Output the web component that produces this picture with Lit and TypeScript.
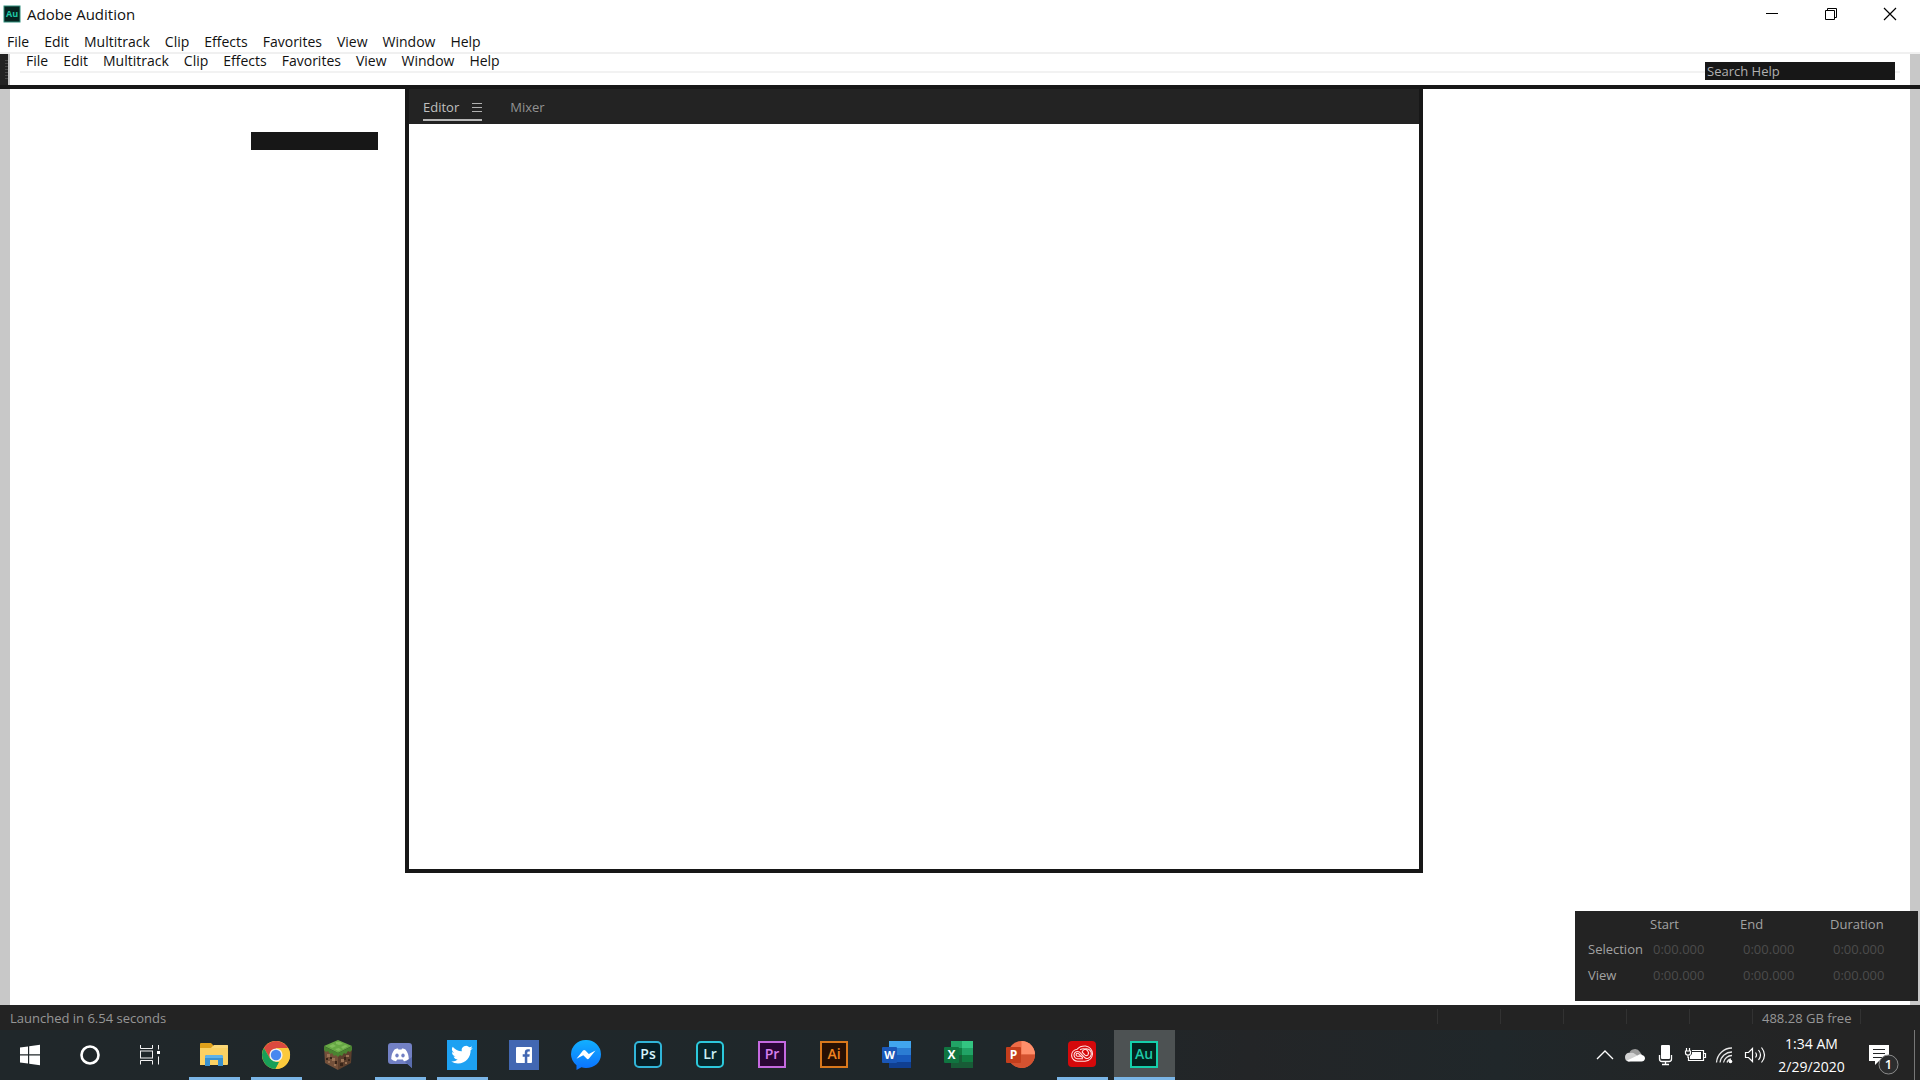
import { LitElement, html, svg, css, nothing, TemplateResult } from "lit";
import { customElement, property } from "lit/decorators.js";
import { classMap } from "lit/directives/class-map.js";

const MENUS = ["File", "Edit", "Multitrack", "Clip", "Effects", "Favorites", "View", "Window", "Help"];

const tile = (label: string, stroke: string, fill: string, ink: string, radius: number) => svg`
  <rect x="2" y="2" width="26" height="25" rx=${radius} fill=${fill} stroke=${stroke} stroke-width="2"/>
  <text x="15" y="19" text-anchor="middle" font-size="14" font-weight="600" fill=${ink}>${label}</text>`;

const ICONS: Record<string, TemplateResult> = {
  start: svg`<path fill="#fff" d="M5 7.600 13 6.400V14.300H5ZM14.200 6.200 25 4.700V14.300H14.200ZM5 15.600H13V23.600L5 22.400ZM14.200 15.600H25V25.200L14.200 23.700Z"/>`,
  cortana: svg`<circle cx="15" cy="15" r="8.500" fill="none" stroke="#fff" stroke-width="2.600"/>`,
  taskview: svg`<g fill="none" stroke="#f2f2f2"><path d="M5.500 5v3.500h12V5M5.500 24.500v-4h12v4M23.500 5v4.500M23.500 16.500v8"/><rect x="5.500" y="11" width="12" height="7"/></g><rect x="22" y="11" width="3" height="3" fill="#fff"/>`,
  explorer: svg`<path fill="#e0a11b" d="M1 4q0-1 1-1h10l2 2v4H1Z"/><path fill="#fbd163" d="M1 8h11l3-3h13q1 0 1 1v18q0 1-1 1H1Z"/><path fill="#fddc83" d="M1 8h11l3-3h14v3H1Z" opacity=".6"/><path fill="#3a91cf" d="M6 26V17q0-2 2-2h14q2 0 2 2v9h-5v-6h-8v6Z"/><path fill="#5db2ea" d="M6 18h18v-1q0-2-2-2H8q-2 0-2 2Z"/>`,
  chrome: svg`<circle cx="15" cy="15" r="14" fill="#fbc93c"/><path fill="#db4a3f" d="M2.900 8 9 18.500 15 15 15 8h12.100A14 14 0 0 0 2.900 8Z"/><path fill="#199f58" d="M2.900 8 9 18.500 15 22h3L14.500 29A14 14 0 0 1 2.900 8Z"/><path fill="#fbc93c" d="M15 8h12.100A14 14 0 0 1 14.500 29L21 18.500Z"/><circle cx="15" cy="15" r="6.600" fill="#f1f1f1"/><circle cx="15" cy="15" r="5.200" fill="#4888f0"/>`,
  minecraft: svg`<path fill="#73503a" d="M1 7 15 13V30L2 23Z"/><path fill="#5c3f2d" d="M29 7 15 13V30L28 23Z"/><path fill="#66a844" d="M15 0 29 6 15 13 1 6Z"/><path fill="#4a8431" d="M1 6 15 13v4l-2-2-2 1-2-3-2 1-2-3-2 1-2-2ZM29 6 15 13v4l2-2 2 1 2-3 2 1 2-3 2 1 2-2Z"/><path fill="#80bd5b" d="M13 2h4l3 2-4 1-3-1ZM6 6l4-2 3 2-4 2ZM18 7l4-2 3 1-5 3ZM12 9l4-1 2 2-3 1Z"/><path fill="#9a7355" d="M4 14h3v3H4ZM9 18h3v3H9ZM5 21h2v2H5ZM18 19h3v3h-3ZM23 15h3v2h-3ZM11 24h2v2h-2ZM22 22h2v2h-2Z"/><path fill="#382519" d="M7 17h2v2H7ZM12 21h2v3h-2ZM3 18h2v2H3ZM21 17h2v3h-2ZM17 23h3v3h-3ZM25 19h2v2h-2Z"/>`,
  discord: svg`<path fill="#7280c4" d="M6 3h18q3 0 3 3v22l-4-4H6q-3 0-3-3V6q0-3 3-3Z"/><path fill="#596cae" d="m20 22 7-5v11Z"/><path fill="#fff" d="M9.500 9.500Q12 8 13 8.500l.4.900h3.200l.4-.900q1-.500 3.500 1Q23.500 13 23.800 19q-2 2-4.800 2.200l-1.200-1.700h-5.600L11 21.200Q8 21 6.200 19 6.500 13 9.500 9.500Z"/><ellipse cx="12" cy="15.500" rx="1.700" ry="1.900" fill="#7280c4"/><ellipse cx="18" cy="15.500" rx="1.700" ry="1.900" fill="#7280c4"/>`,
  twitter: svg`<path fill="#1da1f2" d="M0 0h30v30H0Z"/><path fill="#fff" transform="translate(4.200 3.800) scale(.9)" d="M23.950 4.570a10 10 0 0 1-2.820.780 4.960 4.960 0 0 0 2.160-2.720c-.950.550-2 .960-3.130 1.180a4.920 4.920 0 0 0-8.380 4.480C7.690 8.100 4.070 6.130 1.640 3.160a4.920 4.920 0 0 0 1.520 6.570 4.900 4.900 0 0 1-2.230-.610v.060a4.920 4.920 0 0 0 3.950 4.830 5 5 0 0 1-2.210.080 4.940 4.940 0 0 0 4.600 3.420A9.870 9.870 0 0 1 0 19.540a13.990 13.990 0 0 0 7.550 2.210c9.140 0 14.310-7.720 14.010-14.650a10 10 0 0 0 2.390-2.530Z"/>`,
  facebook: svg`<path fill="#4267b2" d="M0 0h30v30H0Z"/><rect x="7" y="7" width="16" height="16" rx="1" fill="#fff"/><path fill="#4267b2" d="M15.800 23v-6.200h-2.100v-2.500h2.100v-1.800q0-3.200 3.100-3.200h1.900v2.300h-1.200q-1.300 0-1.300 1.200v1.500h2.400l-.300 2.500h-2.100V23Z"/>`,
  messenger: svg`<path fill="url(#msg)" d="M15 0a14.500 14.500 0 0 1 15 14.300C30 22.500 23.500 28 15 28q-2.500 0-4.600-.700L5.500 30v-4.800A14 14 0 0 1 0 14.300 14.500 14.500 0 0 1 15 0Z"/><path fill="#fff" d="M5.500 18.800 12 10.500Q13.200 9.500 14.400 10.500L17.800 14 24.500 10.500 18 18.500Q16.800 19.800 15.600 18.500L12.300 15.200Z"/>`,
  photoshop: tile("Ps", "#31b5d8", "#061e26", "#d5f3fc", 4),
  lightroom: tile("Lr", "#2cc9dc", "#06262b", "#c9eef2", 4),
  premiere: tile("Pr", "#c569e0", "#2a0635", "#d780ef", 0),
  illustrator: tile("Ai", "#d9781c", "#271003", "#ef8420", 0),
  word: svg`<path fill="#41a5ee" d="M8 1h22v7H8Z"/><path fill="#2b7cd3" d="M8 8h22v7H8Z"/><path fill="#185abd" d="M8 15h22v7H8Z"/><path fill="#103f91" d="M8 22h22v6H8Z"/><rect x="1" y="7" width="15" height="16" rx="1" fill="#1a57b8"/><text x="8.500" y="19" text-anchor="middle" font-size="11" font-weight="700" fill="#fff">W</text>`,
  excel: svg`<path fill="#21a366" d="M8 1h11v7H8Z"/><path fill="#33c481" d="M19 1h11v7H19Z"/><path fill="#107c41" d="M8 8h22v14H8Z"/><path fill="#21a366" d="M19 8h11v7H19Z"/><path fill="#185c37" d="M8 15h11v13H8ZM19 22h11v6H19Z"/><rect x="1" y="7" width="15" height="16" rx="1" fill="#107540"/><text x="8.500" y="19" text-anchor="middle" font-size="12" font-weight="700" fill="#fff">X</text>`,
  powerpoint: svg`<circle cx="16.500" cy="14.500" r="13.500" fill="#ed6c47"/><path fill="#ff8f6b" d="M16.500 1a13.500 13.500 0 0 1 13.500 13.500H16.500Z"/><path fill="#d35230" d="M3 14.500h27a13.500 13.500 0 0 1-27 0Z"/><rect x="1" y="7" width="15" height="16" rx="1" fill="#c43e1c"/><text x="8.500" y="19" text-anchor="middle" font-size="12" font-weight="700" fill="#fff">P</text>`,
  cloud: svg`<rect x="1" y="1" width="28" height="26" rx="4" fill="#d5090b"/><g fill="none" stroke="#ffe0e0" stroke-width="1.100"><path d="M11 21.200a6 6 0 0 1-.8-12Q13 5.800 18.500 6q6.500 1 7 8-.6 6.600-7.500 7.200Z"/><path d="M16 18.700h-5.500a3.600 3.600 0 1 1 1.800-6.800L18 17.800q1.500 1.200 3.200.4a4.800 4.800 0 1 0-6.200-6"/><path d="M13 9.800q4.500-2.500 7.500.8 1.800 2 .5 4.200-1.500 1.600-3.200 0L15 12"/><path d="M15.500 16.300h-4.800a1.500 1.500 0 1 1 .8-2.700l4.500 4.600"/></g>`,
  audition: tile("Au", "#14d0ab", "#04231f", "#1ec9a8", 0),
};

interface TaskApp { id: string; name: string; open?: boolean; active?: boolean }

const SYSTEM: TaskApp[] = [
  { id: "start", name: "Start" },
  { id: "cortana", name: "Cortana" },
  { id: "taskview", name: "Task View" },
];

const APPS: TaskApp[] = [
  { id: "explorer", name: "File Explorer", open: true },
  { id: "chrome", name: "Google Chrome", open: true },
  { id: "minecraft", name: "Minecraft" },
  { id: "discord", name: "Discord", open: true },
  { id: "twitter", name: "Twitter", open: true },
  { id: "facebook", name: "Facebook" },
  { id: "messenger", name: "Messenger" },
  { id: "photoshop", name: "Photoshop" },
  { id: "lightroom", name: "Lightroom" },
  { id: "premiere", name: "Premiere Pro" },
  { id: "illustrator", name: "Illustrator" },
  { id: "word", name: "Word" },
  { id: "excel", name: "Excel" },
  { id: "powerpoint", name: "PowerPoint" },
  { id: "cloud", name: "Creative Cloud", open: true },
  { id: "audition", name: "Adobe Audition", open: true, active: true },
];

const TRAY: { name: string; art: TemplateResult }[] = [
  { name: "Show hidden icons", art: svg`<path d="m4 16 8-8 8 8" fill="none" stroke="#fff" stroke-width="1.300"/>` },
  { name: "OneDrive", art: svg`<path fill="#9c9c9c" d="M6 11a6 6 0 0 1 11-2l2 3-9 3Z"/><path fill="#d2d2d2" d="M2 14a4 4 0 0 1 5-4q3-1 5 1l6 4-12 3.500H5.500Q2 18 2 14Z"/><path fill="#fff" d="m4 17.500 11-5.300q2-1.600 4-.2 3 .500 3 3.500-.500 3-3.500 3H6q-1.500 0-2-1Z"/>` },
  { name: "Microphone", art: svg`<rect x="8" y="2" width="9" height="14" rx="1" fill="#fff"/><path d="M6.500 12v4q0 2.500 2.500 2.500h7q2.500 0 2.500-2.500v-4M12.500 18.500v3M9 21.500h7" fill="none" stroke="#fff" stroke-width="1.300"/>` },
  { name: "Battery charging", art: svg`<path d="M9 7.500h11.500v10h-15V14M20.500 10.500h2v4h-2M3.500 5v3M6.500 5v3M2.500 8h5v2q0 2-2.500 2t-2.500-2ZM5 12v3" fill="none" stroke="#fff" stroke-width="1.200"/><path fill="#fff" d="M9 9h9v7H7v-3l2-2Z"/>` },
  { name: "Network", art: svg`<g fill="none" stroke="#e8e8e8" stroke-width="1.300"><path d="M3.500 19.500A15.500 15.500 0 0 1 19 5M7 19.500A12 12 0 0 1 19 9M10.500 19.500A8.500 8.500 0 0 1 19 12.500M14 19.500a5 5 0 0 1 4-3.500"/></g><circle cx="17.500" cy="18.500" r="1.800" fill="#fff"/>` },
  { name: "Volume", art: svg`<g fill="none" stroke="#fff" stroke-width="1.200"><path d="M2.500 9.500h3l4-4v13l-4-4h-3ZM12.500 9.500q2 2.500 0 5M15.500 7q4 5 0 10M18.500 4.500q6 7.500 0 15"/></g>` },
];

@customElement("menu-strip")
export class MenuStrip extends LitElement {
  static styles = css`
    :host { display: block; }
    .menu { display: flex; gap: 15px; margin: 0; padding: 0; list-style: none; }
    .item {
      display: block; margin: 0; padding: 0; border: 0; background: none; color: #111;
      font: 14px/16px "Open Sans", "Noto Sans", sans-serif;
    }
  `;
  render() {
    return html`<ul class="menu">${MENUS.map((m) => html`<li><button class="item">${m}</button></li>`)}</ul>`;
  }
}

@customElement("time-panel")
export class TimePanel extends LitElement {
  static styles = css`
    :host { display: block; background: #232323; }
    .times {
      width: 100%; border-collapse: collapse; table-layout: fixed; color: #a2a2a2;
      font: 13px/18px "Open Sans", "Noto Sans", sans-serif;
    }
    th, td { padding: 0; text-align: left; font-weight: 400; height: 26px; vertical-align: middle; }
    thead th, thead td { height: 24px; }
    tbody th { padding-left: 13px; }
    td { padding-left: 3px; color: #4c4c4c; }
    .label { width: 75px; }
    .value { width: 90px; }
  `;
  render() {
    const zero = "0:00.000";
    return html`
      <table class="times">
        <colgroup><col class="label" /><col class="value" /><col class="value" /><col /></colgroup>
        <thead><tr><td></td><th scope="col">Start</th><th scope="col">End</th><th scope="col">Duration</th></tr></thead>
        <tbody>
          ${["Selection", "View"].map((r) => html`<tr><th scope="row">${r}</th><td>${zero}</td><td>${zero}</td><td>${zero}</td></tr>`)}
        </tbody>
      </table>`;
  }
}

@customElement("task-button")
export class TaskButton extends LitElement {
  @property({ attribute: false }) app!: TaskApp;
  static styles = css`
    :host { display: flex; }
    .task {
      flex: 1; display: flex; flex-direction: column; align-items: center; justify-content: space-between;
      margin: 0; padding: 10px 0 0; border: 0; background: none;
    }
    .active { background: #4d5253; }
    .icon { display: block; width: 30px; height: 30px; font-family: "Open Sans", "Noto Sans", sans-serif; }
    .mark { width: 51px; height: 3px; }
    .open .mark { background: #7ab5e6; }
    .active .mark { width: 100%; }
  `;
  render() {
    const a = this.app;
    return html`
      <button class=${classMap({ task: true, open: !!a.open, active: !!a.active })} aria-label=${a.name}>
        <svg class="icon" viewBox=${SYSTEM.includes(a) ? "0 0 30 30" : "1 0 30 30"} overflow="visible" aria-hidden="true">
          ${a.id === "messenger"
            ? svg`<defs><linearGradient id="msg" x2="0" y2="1"><stop stop-color="#12b0ff"/><stop offset="1" stop-color="#0a70ff"/></linearGradient></defs>`
            : nothing}
          ${ICONS[a.id]}
        </svg>
        <span class="mark"></span>
      </button>`;
  }
}

@customElement("task-bar")
export class TaskBar extends LitElement {
  static styles = css`
    :host {
      display: flex; justify-content: space-between; height: 50px; color: #fff;
      background: linear-gradient(90deg, #20272a 0, #1f272a 55%, #232527 65%, #20272a 78%, #242424 95%);
      font: 14px/23px "Open Sans", "Noto Sans", sans-serif;
    }
    .group, .tray { display: flex; }
    .apps { display: flex; gap: 1px; margin-left: 4px; }
    .system { width: 60px; }
    .app { width: 61px; }
    .tray { align-items: center; }
    .status { display: block; margin: 0; padding: 0 3px; border: 0; background: none; }
    .glyph { display: block; width: 24px; height: 24px; }
    .clock { width: 83px; padding: 0; margin: 0; border: 0; background: none; color: inherit; font: inherit; text-align: center; }
    .line { display: block; }
    .notes { margin: 0 0 0 14px; padding: 0; border: 0; background: none; }
    .bubble { display: block; width: 34px; height: 40px; font-family: "Open Sans", sans-serif; }
    .peek { align-self: stretch; width: 6px; margin: 0 0 0 13px; padding: 0; border: 0; border-left: 1px solid #777; background: none; }
  `;
  render() {
    return html`
      <div class="group">
        ${SYSTEM.map((a) => html`<task-button class="system" .app=${a}></task-button>`)}
        <div class="apps">${APPS.map((a) => html`<task-button class="app" .app=${a}></task-button>`)}</div>
      </div>
      <div class="tray">
        ${TRAY.map((t) => html`<button class="status" aria-label=${t.name}><svg class="glyph" viewBox="0 0 24 24" aria-hidden="true">${t.art}</svg></button>`)}
        <button class="clock"><span class="line">1:34 AM</span><span class="line">2/29/2020</span></button>
        <button class="notes" aria-label="Notifications">
          <svg class="bubble" viewBox="0 0 34 40">
            <path fill="#fff" d="M2 10h20v16H12l-4 4v-4H2Z"/>
            <path stroke="#232527" stroke-width="1.200" d="M6 14.500h12M6 18.500h12M6 22.500h9"/>
            <circle cx="21.500" cy="29.500" r="9.500" fill="#2c2d2e" stroke="#8b8b8b"/>
            <text x="21.500" y="34" text-anchor="middle" font-size="13" font-weight="600" fill="#fff">1</text>
          </svg>
        </button>
        <button class="peek" aria-label="Show desktop"></button>
      </div>`;
  }
}

@customElement("app-root")
export class AppRoot extends LitElement {
  static styles = css`
    :host {
      display: flex; flex-direction: column; min-height: 100vh; background: #fff; color: #111;
      font: 13px/18px "Open Sans", "Noto Sans", sans-serif;
    }
    .title { display: flex; align-items: center; height: 28px; padding: 0 1px 0 3px; }
    .logo { width: 18px; height: 18px; }
    .name { flex: 1; margin: 0 0 0 6px; font-size: 15px; line-height: 20px; font-weight: 400; }
    .control { display: block; width: 59px; height: 28px; margin: 0; padding: 0; border: 0; background: none; }
    .sign { display: block; width: 14px; height: 14px; margin: 0 auto; }
    .menus { padding: 6px 7px 2px; border-bottom: 2px solid #f0f0f0; }
    .tools { display: flex; position: relative; height: 31px; border-bottom: 4px solid #171717; }
    .grip { width: 8px; background: #232323; border-right: 2px solid #c8c8c8; }
    .ridges {
      width: 3px; height: 20px; margin: 6px 0 0 5px;
      background: repeating-linear-gradient(#484848 0 1px, #232323 1px 3px);
    }
    .submenus { flex: 1; align-self: flex-start; height: 17px; margin: 0 10px; padding: 0 6px; border-bottom: 2px solid #f2f2f2; }
    .lifted { margin-top: -1px; }
    .rail { width: 10px; background: #c8c8c8; }
    .search {
      position: absolute; top: 8px; right: 25px; width: 190px; height: 18px; box-sizing: border-box;
      margin: 0; padding: 0 2px; border: 0; background: #171717; color: #b0b0b0; font: inherit;
    }
    .search::placeholder { color: #b0b0b0; opacity: 1; }
    .work {
      flex: 1; position: relative; display: grid;
      grid-template-columns: 10px 395fr 1018fr 487fr 10px;
    }
    .side { display: flex; justify-content: flex-end; padding: 43px 27px 0 0; }
    .field { width: 127px; height: 18px; background: #171717; }
    .editor {
      display: flex; flex-direction: column; margin-bottom: 132px;
      border: 4px solid #171717; border-top: 0;
    }
    .tabs { display: flex; gap: 28px; height: 30px; padding: 5px 14px 0; background: #232323; }
    .tab {
      display: flex; align-items: center; align-self: flex-start; gap: 13px; height: 27px; margin: 0; padding: 0;
      border: 0; border-bottom: 2px solid transparent; box-sizing: border-box;
      background: none; color: #929292; font: inherit;
    }
    .current { border-color: #b8b8b8; color: #c0c0c0; }
    .bars { width: 10px; height: 10px; }
    .panel { position: absolute; right: 2px; bottom: 4px; width: 343px; height: 90px; box-sizing: border-box; padding-top: 1px; }
    .footer { display: flex; justify-content: space-between; height: 25px; padding-left: 10px; background: #232323; color: #969696; line-height: 26px; }
    .cells { display: grid; grid-template-columns: repeat(5, 63px) 108px 60px; padding-top: 4px; line-height: 18px; }
    .cell { height: 15px; padding-left: 9px; border-left: 1px solid #323232; }
  `;
  render() {
    return html`
      <header class="title">
        <svg class="logo" viewBox="0 0 18 18" aria-hidden="true">
          <rect x="1" y="1" width="16" height="16" fill="#06241f" stroke="#2f8e7c" stroke-width="1"/>
          <text x="9" y="12" text-anchor="middle" font-size="9" font-weight="700" fill="#1fc8a6">Au</text>
        </svg>
        <h1 class="name">Adobe Audition</h1>
        <button class="control" aria-label="Minimize"><svg class="sign" viewBox="0 0 14 14"><path d="M1 6.500h12" stroke="#000"/></svg></button>
        <button class="control" aria-label="Restore"><svg class="sign" viewBox="0 0 14 14"><path d="M1.500 3.500h9v9h-9ZM3.500 3.500v-2h9v9h-2" fill="none" stroke="#000"/></svg></button>
        <button class="control" aria-label="Close"><svg class="sign" viewBox="0 0 14 14"><path d="m1 1 12 12M13 1 1 13" stroke="#000" stroke-width="1.200"/></svg></button>
      </header>
      <nav class="menus"><menu-strip></menu-strip></nav>
      <div class="tools">
        <div class="grip"><div class="ridges"></div></div>
        <nav class="submenus"><menu-strip class="lifted"></menu-strip></nav>
        <div class="rail"></div>
        <input class="search" type="text" placeholder="Search Help" aria-label="Search Help" />
      </div>
      <main class="work">
        <div class="rail"></div>
        <div class="side"><div class="field"></div></div>
        <section class="editor">
          <div class="tabs">
            <button class="tab current">Editor
              <svg class="bars" viewBox="0 0 10 10" aria-hidden="true"><path d="M0 1.500h10M0 5.500h10M0 9.500h10" stroke="#b0b0b0"/></svg>
            </button>
            <button class="tab">Mixer</button>
          </div>
        </section>
        <div></div>
        <div class="rail"></div>
        <time-panel class="panel"></time-panel>
      </main>
      <footer class="footer">
        <span>Launched in 6.54 seconds</span>
        <div class="cells">
          ${["", "", "", "", "", "488.28 GB free", ""].map((c) => html`<div class="cell">${c}</div>`)}
        </div>
      </footer>
      <task-bar></task-bar>`;
  }
}
